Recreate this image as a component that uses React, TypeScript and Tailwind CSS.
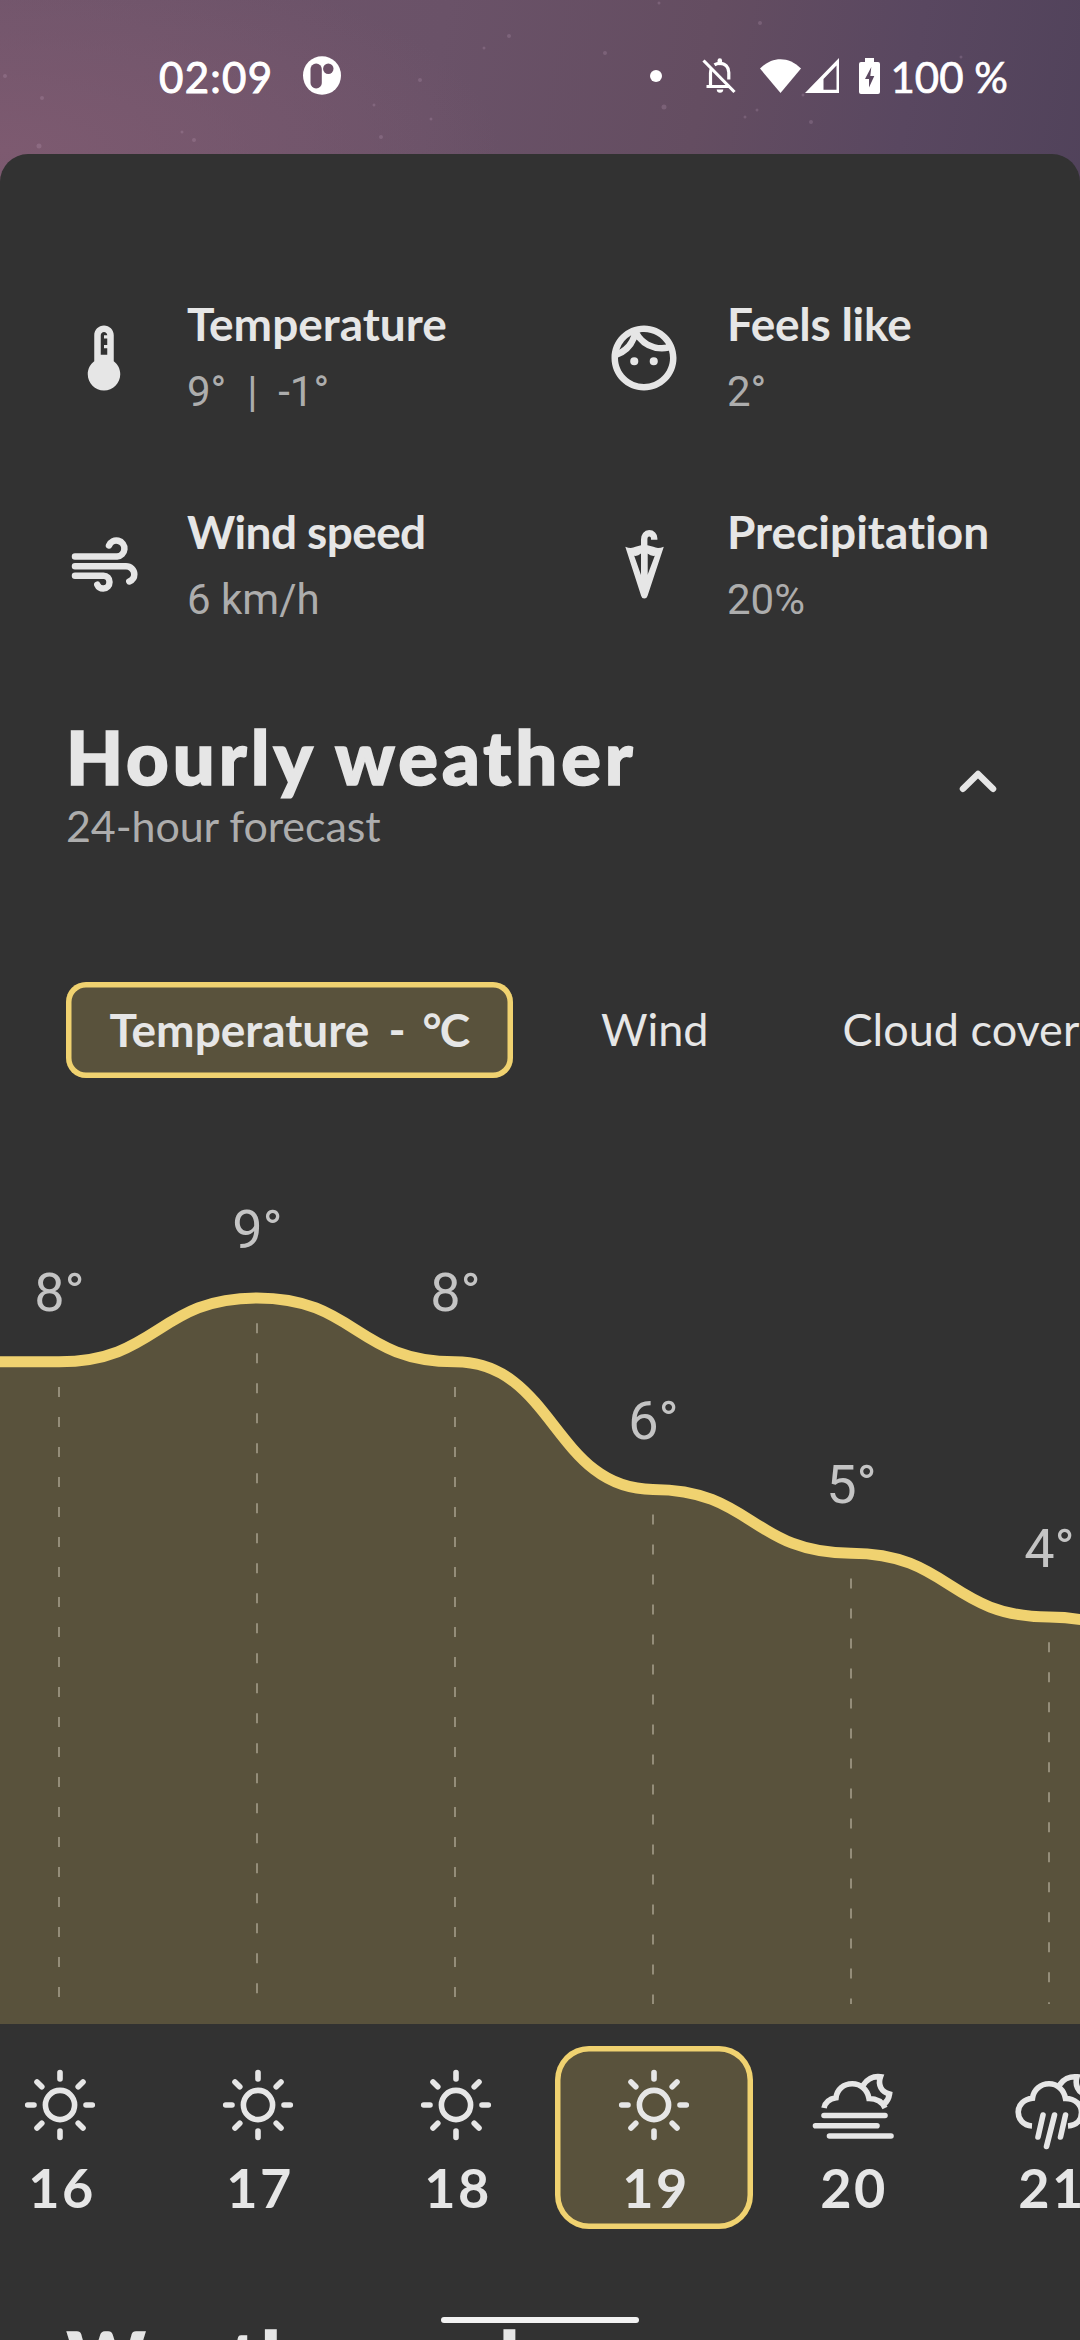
import type { ReactNode } from "react";
import { MdDeviceThermostat, MdOutlineFace } from "react-icons/md";

const STEP = 198;
const FIRST_X = 59;
const PX_PER_DEGREE = 63.8;

const temps = [8, 8, 9, 8, 6, 5, 4, 3];
const chartTop = 1186;
const yOf = (t: number) => 1298 + (9 - t) * PX_PER_DEGREE - chartTop;
const points = temps.map((t, i) => ({ t, x: FIRST_X + (i - 1) * STEP, y: yOf(t) }));

const line = points.reduce((d, p, i) => {
  if (i === 0) return `M${p.x} ${p.y}`;
  const prev = points[i - 1];
  const mid = (prev.x + p.x) / 2;
  return `${d} C${mid} ${prev.y} ${mid} ${p.y} ${p.x} ${p.y}`;
}, "");

const stars = [
  [5, 76, 2], [42, 98, 2], [39, 146, 2.5], [194, 140, 2], [182, 132, 1.5], [381, 137, 2], [420, 80, 2],
  [509, 36, 2], [484, 48, 1.5], [605, 53, 2], [664, 107, 2.5], [760, 23, 2], [757, 110, 1.5], [745, 117, 1.5],
  [811, 122, 2], [803, 95, 1.5], [961, 57, 1.5], [431, 119, 1.5], [659, 3, 1.5], [374, 105, 1.5],
];

function StatusBar() {
  return (
    <header className="relative h-[154px] shrink-0">
      <svg className="absolute inset-0" width="1080" height="154" fill="#c9a9c4" fillOpacity="0.22">
        {stars.map(([x, y, r]) => (
          <circle key={`${x}-${y}`} cx={x} cy={y} r={r} />
        ))}
      </svg>
      <div className="relative flex h-[151px] items-center pr-[72px] pl-[159px] text-white">
        <span className="w-[144px] pt-[3px] text-[42px] leading-none tracking-[1.300px] [-webkit-text-stroke:1px_white]">02:09</span>
        <svg width="38" height="39" viewBox="0 0 38 39">
          <ellipse cx="19" cy="19.5" rx="19" ry="19.3" fill="#fff" />
          <rect x="7.5" y="7.5" width="11.3" height="25" rx="5.6" fill="#6c5067" />
          <circle cx="25.3" cy="12.7" r="5.2" fill="#6c5067" />
        </svg>
        <svg className="ml-auto" width="12" height="12"><circle cx="6" cy="6" r="6" fill="#fff" /></svg>
        <svg className="ml-[40px]" width="34" height="36" viewBox="0 0 34 36" fill="none" stroke="#fff" strokeWidth="3.2">
          <path d="M1.5 2.5 32.5 34" />
          <path d="M4.500 28.500h23M8.500 28.500V15c0-1.500.3-3 .9-4.200M12.500 6.800c1.500-1 3.200-1.500 5.300-1.500 5.500 0 9 4 9 9.200v7" />
          <path d="M17.800 5V2.500" strokeWidth="4.500" strokeLinecap="round" />
          <path d="M14.700 31.500h6.600c0 2-1.300 3.300-3.300 3.300s-3.300-1.300-3.300-3.300z" fill="#fff" stroke="none" />
        </svg>
        <svg className="ml-[24px]" width="41" height="34" viewBox="0 0 41 34">
          <path d="M0 9.500C12-3 29-3 41 9.500L20.500 34z" fill="#fff" />
        </svg>
        <svg className="ml-[4px]" width="34" height="35" viewBox="0 0 34 35">
          <path fillRule="evenodd" d="M34 0v35H0zM31.500 7.500 18.500 21v10.700h13z" fill="#fff" />
        </svg>
        <svg className="ml-[20px]" width="21" height="36" viewBox="0 0 21 36">
          <path fillRule="evenodd" d="M6 0h9v4h4q2 0 2 2v28q0 2-2 2H2q-2 0-2-2V6q0-2 2-2h4zM12.300 9 6 21h4v8.500L15.300 18h-4z" fill="#fff" />
        </svg>
        <span className="ml-[11px] pt-[3px] text-[42px] leading-none whitespace-nowrap [-webkit-text-stroke:0.7px_white]">100 %</span>
      </div>
    </header>
  );
}

function WindIcon() {
  return (
    <svg width="78" height="78" viewBox="0 0 78 78" fill="none" stroke="#e6e6e6" strokeWidth="6.500" strokeLinecap="round">
      <path d="M10 29.500h42a8 8 0 1 0-8-11" />
      <path d="M10 39.200h51c4.500 0 8.300 3.600 8.300 8 0 3.400-2 6-5 7.300" />
      <path d="M10 48.800h28.500c3.500 0 6 2.700 6 6.200 0 3.500-2.500 6.500-6.200 6.500-2.800 0-5-1.500-6-3.800" />
    </svg>
  );
}

function UmbrellaIcon() {
  return (
    <svg width="78" height="78" viewBox="0 0 78 78" fill="none" stroke="#e6e6e6" strokeWidth="6.400">
      <path d="M39.200 60V12.500c0-3.800 2-6.200 5-6.200 3 0 5 2 5 5v1.500" />
      <path
        d="M20.300 19.700C24 21.200 27.500 21.300 30.500 19.800L36 18.300h6.500l5.800 1.500c3 1.500 6.500 1.400 10.500-.1L42.500 69q-.8 2.500-3.200 2.500T36.200 69zM29.200 28.800 36 48V26.500q-3.200 3-6.800 2.300zM49.800 28.800 42.500 48V26.500q3.600 3 7.300 2.300z"
        fill="#e6e6e6"
        fillRule="evenodd"
        stroke="none"
      />
    </svg>
  );
}

function Stat({ icon, title, value, titleClass = "" }: { icon: ReactNode; title: string; value: string; titleClass?: string }) {
  return (
    <div className="flex h-[208px] items-start">
      <div className="mt-[22px] ml-[65px] shrink-0 text-[78px] text-[#e6e6e6]">{icon}</div>
      <div className="ml-[44px] whitespace-pre">
        <div className={`text-[46px] leading-[54px] font-bold text-[#e6e6e6] [font-variant-ligatures:none] ${titleClass}`}>{title}</div>
        <div className="mt-[15px] font-[Roboto] text-[42px] leading-[52px] text-[#adadad]">{value}</div>
      </div>
    </div>
  );
}

function Chart() {
  return (
    <svg className="block shrink-0" width="1080" height="838" viewBox="0 0 1080 838">
      <path d={`${line} V838 H${points[0].x} Z`} fill="#59523c" />
      <path d={line} fill="none" stroke="#f0d270" strokeWidth="11" />
      {points.slice(1, 7).map((p) => (
        <g key={p.x}>
          <path d={`M${p.x} ${p.y + 25.200}V818`} stroke="#948d79" strokeWidth="2" strokeDasharray="10 20" />
          <text x={p.x + 0.5} y={p.y - 50.500} textAnchor="middle" className="font-[Roboto] text-[54px]" fill="#c4c4c4">
            {p.t}°
          </text>
        </g>
      ))}
    </svg>
  );
}

function SunIcon() {
  return (
    <svg width="96" height="96" viewBox="-48 -48 96 96" fill="none" stroke="#e6e6e6" strokeWidth="5.600" strokeLinecap="round">
      <circle r="14.600" />
      <path d="M0-32.500V-26M0 26v6.500M-32.300 0H-26M26 0h6.300M-23-23l4.800 4.800M23-23l-4.800 4.800M-23 23l4.800-4.800M23 23l-4.800-4.800" />
    </svg>
  );
}

function FogNightIcon() {
  return (
    <svg className="overflow-visible" width="96" height="96" viewBox="-48 -48 96 96" fill="none" stroke="#e6e6e6" strokeWidth="5.600">
      <path d="M-28 3C-27-2-22.500-6-16-7.200-15-15.500-8.500-21.200.2-21.200S15.500-15 17-6.500C24.500-6.500 30-3.500 33 3" />
      <path d="M11-19.500C14.500-25.500 21-29.300 28.500-28.200 25.500-20 29.500-13 37.500-11 37-7.500 35.500-4 32.500-1.500" />
      <path d="M-28 10.500h61M-36.500 20.700h61.500M-22.500 31h61.500" strokeLinecap="round" />
    </svg>
  );
}

function RainNightIcon() {
  return (
    <svg className="overflow-visible" width="96" height="96" viewBox="-48 -48 96 96" fill="none" stroke="#e6e6e6" strokeWidth="5.600">
      <path d="M-18 21C-27 20.500-31.800 14-31.800 7S-26-6-17.500-6.800C-16.500-15-9.500-21.200-1-21.200S14-15 15.500-6.500C25-6.500 31.500-.5 31.500 7.500S26 20.500 18 21" />
      <path d="M9.500-20C13-25.500 19.500-29 27-28.200 24.500-20 28-12.500 36-10.200 35.500-7 34-4 31-1.500" />
      <path d="M-7 10-12 32M4.500 10-3.500 41.500M15.500 10 10.500 32" strokeLinecap="round" />
    </svg>
  );
}

const hours: { hour: string; icon: ReactNode; active?: boolean }[] = [
  { hour: "16", icon: <SunIcon /> },
  { hour: "17", icon: <SunIcon /> },
  { hour: "18", icon: <SunIcon /> },
  { hour: "19", icon: <SunIcon />, active: true },
  { hour: "20", icon: <FogNightIcon /> },
  { hour: "21", icon: <RainNightIcon /> },
];

function Hours() {
  return (
    <div className="mt-[22px] -ml-[39.500px] flex">
      {hours.map(({ hour, icon, active }) => (
        <div
          key={hour}
          className={
            active
              ? "flex h-[183px] w-[198px] shrink-0 flex-col items-center rounded-[34px] bg-[#59523c] shadow-[inset_0_0_0_5.500px_#f0d270]"
              : "flex h-[183px] w-[198px] shrink-0 flex-col items-center"
          }
        >
          <div className="mt-[11px] h-[96px]">{icon}</div>
          <div className="mt-[3px] pl-[5px] text-[54px] leading-[64px] font-bold tracking-[2.500px] text-[#e6e6e6]">{hour}</div>
        </div>
      ))}
    </div>
  );
}

function SectionTitle({ children }: { children: ReactNode }) {
  return (
    <h2 className="text-[74px] leading-[88px] font-black tracking-[4px] whitespace-nowrap text-[#e6e6e6] [-webkit-text-stroke:1.600px_#e6e6e6]">
      {children}
    </h2>
  );
}

export default function App() {
  return (
    <div className="relative flex h-[2340px] w-[1080px] flex-col overflow-hidden bg-[radial-gradient(ellipse_500px_200px_at_0px_150px,#7d5a70_0%,#7d5a7000_100%),linear-gradient(100deg,#70556b_0%,#6a5268_30%,#644d61_48%,#594760_62%,#50425a_76%,#4d4156_88%,#463f50_100%)] font-[Lato,sans-serif]">
      <StatusBar />
      <main className="flex grow flex-col overflow-hidden rounded-t-[28px] bg-[#323232]">
        <section className="mt-[143px] grid h-[416px] shrink-0 grid-cols-2">
          <Stat icon={<MdDeviceThermostat />} title="Temperature" value="9°  |  -1°" />
          <Stat icon={<MdOutlineFace />} title="Feels like" value="2°" titleClass="tracking-[-0.250px]" />
          <Stat icon={<WindIcon />} title="Wind speed" value="6 km/h" titleClass="tracking-[-0.600px]" />
          <Stat icon={<UmbrellaIcon />} title="Precipitation" value="20%" />
        </section>
        <section className="flex h-[150px] shrink-0 items-start justify-between pr-[83px] pl-[66px]">
          <div>
            <SectionTitle>Hourly weather</SectionTitle>
            <p className="text-[43px] leading-[50px] tracking-[-0.100px] text-[#adadad]">24-hour forecast</p>
          </div>
          <svg className="mt-[57px]" width="38" height="24" viewBox="0 0 38 24" fill="none" stroke="#e6e6e6" strokeWidth="6.500" strokeLinecap="round" strokeLinejoin="round">
            <path d="M4 18.700 19 4 34 18.700" />
          </svg>
        </section>
        <nav className="mt-[119px] ml-[66px] flex h-[96px] shrink-0 items-center text-[45px] whitespace-pre text-[#e6e6e6]">
          <div className="flex h-[96px] w-[447px] shrink-0 items-center rounded-[20px] bg-[#59523c] pb-[2px] pl-[43.500px] text-[46px] font-bold shadow-[inset_0_0_0_5.500px_#f0d270]">
            <span className="w-[279px]">Temperature</span>
            <span className="w-[34px]">-</span>
            <span><span className="tracking-[-2px]">°</span>C</span>
          </div>
          <span className="ml-[88px]">Wind</span>
          <span className="ml-[134px]">Cloud cover</span>
        </nav>
        <div className="mt-[108px]">
          <Chart />
        </div>
        <Hours />
        <div className="mt-[85px] ml-[67px] shrink-0">
          <SectionTitle>Weather radar</SectionTitle>
        </div>
      </main>
      <div className="absolute bottom-[17px] left-[441px] h-[6px] w-[198px] rounded-full bg-[#f2f2f2]" />
    </div>
  );
}
